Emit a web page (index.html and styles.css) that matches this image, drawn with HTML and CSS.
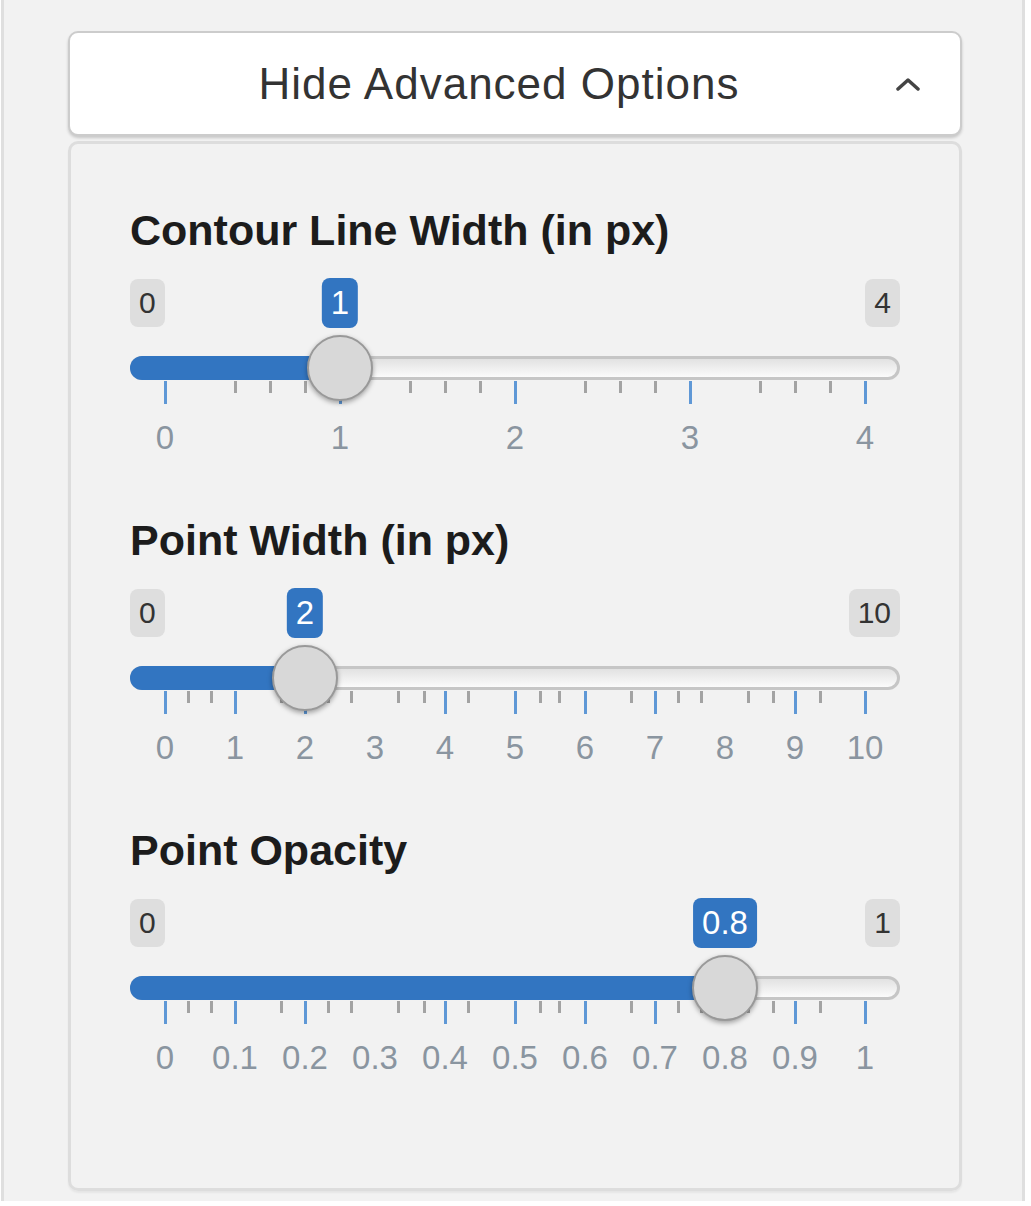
FILE: index.html
```html
<!DOCTYPE html>
<html lang="en">
<head>
<meta charset="utf-8">
<title>Advanced Options</title>
<link rel="stylesheet" href="styles.css">
</head>
<body>
<div class="sidebar">
  <button class="toggle" type="button">
    <span class="toggle-text">Hide Advanced Options</span>
    <svg class="toggle-caret" viewBox="0 0 24 14" aria-hidden="true"><polyline points="2,12 12,3 22,12" fill="none" stroke="#444" stroke-width="3.5" stroke-linecap="round" stroke-linejoin="round"/></svg>
  </button>
  <div class="panel">
    <div class="field">
      <div class="field-label">Contour Line Width (in px)</div>
      <div class="irs" style="--f:0.25">
        <div class="irs-labels">
          <span class="irs-minmax">0</span>
          <span class="irs-single">1</span>
          <span class="irs-minmax">4</span>
        </div>
        <div class="irs-track">
          <div class="irs-line"></div>
          <div class="irs-bar"></div>
          <div class="irs-handle"></div>
        </div>
        <div class="irs-grid">
          <span class="tick" style="left:0%"></span>
          <span class="tick small" style="left:10%"></span>
          <span class="tick small" style="left:15%"></span>
          <span class="tick small" style="left:20%"></span>
          <span class="tick" style="left:25%"></span>
          <span class="tick small" style="left:35%"></span>
          <span class="tick small" style="left:40%"></span>
          <span class="tick small" style="left:45%"></span>
          <span class="tick" style="left:50%"></span>
          <span class="tick small" style="left:60%"></span>
          <span class="tick small" style="left:65%"></span>
          <span class="tick small" style="left:70%"></span>
          <span class="tick" style="left:75%"></span>
          <span class="tick small" style="left:85%"></span>
          <span class="tick small" style="left:90%"></span>
          <span class="tick small" style="left:95%"></span>
          <span class="tick" style="left:100%"></span>
          <span class="tick-text" style="left:0%">0</span>
          <span class="tick-text" style="left:25%">1</span>
          <span class="tick-text" style="left:50%">2</span>
          <span class="tick-text" style="left:75%">3</span>
          <span class="tick-text" style="left:100%">4</span>
        </div>
      </div>
    </div>

    <div class="field">
      <div class="field-label">Point Width (in px)</div>
      <div class="irs" style="--f:0.2">
        <div class="irs-labels">
          <span class="irs-minmax">0</span>
          <span class="irs-single">2</span>
          <span class="irs-minmax">10</span>
        </div>
        <div class="irs-track">
          <div class="irs-line"></div>
          <div class="irs-bar"></div>
          <div class="irs-handle"></div>
        </div>
        <div class="irs-grid">
          <span class="tick" style="left:0%"></span>
          <span class="tick small" style="left:3.4%"></span>
          <span class="tick small" style="left:6.6%"></span>
          <span class="tick" style="left:10%"></span>
          <span class="tick small" style="left:16.7%"></span>
          <span class="tick" style="left:20%"></span>
          <span class="tick small" style="left:23.3%"></span>
          <span class="tick small" style="left:26.7%"></span>
          <span class="tick small" style="left:33.3%"></span>
          <span class="tick small" style="left:37%"></span>
          <span class="tick" style="left:40%"></span>
          <span class="tick small" style="left:43.4%"></span>
          <span class="tick" style="left:50%"></span>
          <span class="tick small" style="left:53.6%"></span>
          <span class="tick small" style="left:56.4%"></span>
          <span class="tick" style="left:60%"></span>
          <span class="tick small" style="left:66.6%"></span>
          <span class="tick" style="left:70%"></span>
          <span class="tick small" style="left:73.3%"></span>
          <span class="tick small" style="left:76.7%"></span>
          <span class="tick small" style="left:83.4%"></span>
          <span class="tick small" style="left:86.9%"></span>
          <span class="tick" style="left:90%"></span>
          <span class="tick small" style="left:93.6%"></span>
          <span class="tick" style="left:100%"></span>
          <span class="tick-text" style="left:0%">0</span>
          <span class="tick-text" style="left:10%">1</span>
          <span class="tick-text" style="left:20%">2</span>
          <span class="tick-text" style="left:30%">3</span>
          <span class="tick-text" style="left:40%">4</span>
          <span class="tick-text" style="left:50%">5</span>
          <span class="tick-text" style="left:60%">6</span>
          <span class="tick-text" style="left:70%">7</span>
          <span class="tick-text" style="left:80%">8</span>
          <span class="tick-text" style="left:90%">9</span>
          <span class="tick-text" style="left:100%">10</span>
        </div>
      </div>
    </div>

    <div class="field">
      <div class="field-label">Point Opacity</div>
      <div class="irs" style="--f:0.8">
        <div class="irs-labels">
          <span class="irs-minmax">0</span>
          <span class="irs-single">0.8</span>
          <span class="irs-minmax">1</span>
        </div>
        <div class="irs-track">
          <div class="irs-line"></div>
          <div class="irs-bar"></div>
          <div class="irs-handle"></div>
        </div>
        <div class="irs-grid">
          <span class="tick" style="left:0%"></span>
          <span class="tick small" style="left:3.4%"></span>
          <span class="tick small" style="left:6.6%"></span>
          <span class="tick" style="left:10%"></span>
          <span class="tick small" style="left:16.7%"></span>
          <span class="tick" style="left:20%"></span>
          <span class="tick small" style="left:23.3%"></span>
          <span class="tick small" style="left:26.7%"></span>
          <span class="tick small" style="left:33.3%"></span>
          <span class="tick small" style="left:37%"></span>
          <span class="tick" style="left:40%"></span>
          <span class="tick small" style="left:43.4%"></span>
          <span class="tick" style="left:50%"></span>
          <span class="tick small" style="left:53.6%"></span>
          <span class="tick small" style="left:56.4%"></span>
          <span class="tick" style="left:60%"></span>
          <span class="tick small" style="left:66.6%"></span>
          <span class="tick" style="left:70%"></span>
          <span class="tick small" style="left:73.3%"></span>
          <span class="tick small" style="left:76.7%"></span>
          <span class="tick small" style="left:83.4%"></span>
          <span class="tick small" style="left:86.9%"></span>
          <span class="tick" style="left:90%"></span>
          <span class="tick small" style="left:93.6%"></span>
          <span class="tick" style="left:100%"></span>
          <span class="tick-text" style="left:0%">0</span>
          <span class="tick-text" style="left:10%">0.1</span>
          <span class="tick-text" style="left:20%">0.2</span>
          <span class="tick-text" style="left:30%">0.3</span>
          <span class="tick-text" style="left:40%">0.4</span>
          <span class="tick-text" style="left:50%">0.5</span>
          <span class="tick-text" style="left:60%">0.6</span>
          <span class="tick-text" style="left:70%">0.7</span>
          <span class="tick-text" style="left:80%">0.8</span>
          <span class="tick-text" style="left:90%">0.9</span>
          <span class="tick-text" style="left:100%">1</span>
        </div>
      </div>
    </div>
  </div>
</div>
</body>
</html>
```

FILE: styles.css
```css
* { box-sizing: border-box; }

html, body {
  margin: 0;
  padding: 0;
  background: #ffffff;
}

body {
  font-family: "Liberation Sans", Arial, sans-serif;
  color: #333;
}

.sidebar {
  margin-left: 1px;
  width: 1024px;
  height: 1201px;
  background: #f2f2f2;
  border-left: 3px solid #dfdfdf;
  border-right: 3px solid #dfdfdf;
  padding: 31px 0 0 64px;
}

.toggle {
  width: 894px;
  height: 105px;
  display: flex;
  align-items: center;
  padding: 0 40px 0 32px;
  margin: 0;
  background: #ffffff;
  border: 2px solid #cccccc;
  border-radius: 10px;
  box-shadow: 0 2px 3px rgba(0, 0, 0, 0.18);
  font-family: "Liberation Sans", Arial, sans-serif;
  cursor: pointer;
}

.toggle-text {
  flex: 1;
  text-align: center;
  font-size: 44px;
  letter-spacing: 1px;
  line-height: 1;
  color: #333;
}

.toggle-caret {
  display: block;
  width: 24px;
  height: 14px;
}

.panel {
  margin-top: 5px;
  width: 894px;
  height: 1050px;
  border: 3px solid #dddddd;
  border-radius: 10px;
  padding: 61px 59px 0;
  box-shadow: 0 2px 2px rgba(0, 0, 0, 0.05);
  display: flex;
  flex-direction: column;
  gap: 57px;
}

.field-label {
  font-weight: bold;
  font-size: 43px;
  line-height: 50px;
  color: #1c1c1c;
  margin-bottom: 23px;
}

.irs {
  --f: 0;
}

.irs-labels {
  position: relative;
  height: 50px;
  display: flex;
  justify-content: space-between;
  align-items: center;
}

.irs-minmax {
  font-size: 30px;
  line-height: 42px;
  padding: 3px 9px;
  background: #dedede;
  border-radius: 8px;
  color: #333;
}

.irs-single {
  position: absolute;
  top: 0;
  left: calc(35px + var(--f) * 700px);
  transform: translateX(-50%);
  font-size: 33px;
  line-height: 44px;
  padding: 3px 9px;
  background: #3275c1;
  color: #ffffff;
  border-radius: 8px;
}

.irs-track {
  position: relative;
  height: 24px;
  margin-top: 28px;
}

.irs-line {
  height: 24px;
  border: 3px solid #c6c6c6;
  border-radius: 12px;
  background: linear-gradient(#e2e2e2, #fbfbfb);
}

.irs-bar {
  position: absolute;
  left: 0;
  top: 0;
  height: 24px;
  width: calc(35px + var(--f) * 700px);
  background: #3275c1;
  border-radius: 12px 0 0 12px;
}

.irs-handle {
  position: absolute;
  z-index: 2;
  top: -21px;
  left: calc(2px + var(--f) * 700px);
  width: 66px;
  height: 66px;
  border-radius: 50%;
  background: #d8d8d8;
  border: 2px solid #999999;
  box-shadow: 0 2px 5px rgba(0, 0, 0, 0.35);
}

.irs-grid {
  position: relative;
  height: 77px;
  margin: 1px 35px 0;
}

.tick {
  position: absolute;
  top: 0;
  width: 3px;
  margin-left: -1.5px;
  height: 23px;
  background: #5f98d6;
}

.tick.small {
  height: 12px;
  background: #a3a3a3;
}

.tick-text {
  position: absolute;
  top: 37px;
  transform: translateX(-50%);
  font-size: 33px;
  line-height: 40px;
  color: #8a95a0;
  white-space: nowrap;
}
```
